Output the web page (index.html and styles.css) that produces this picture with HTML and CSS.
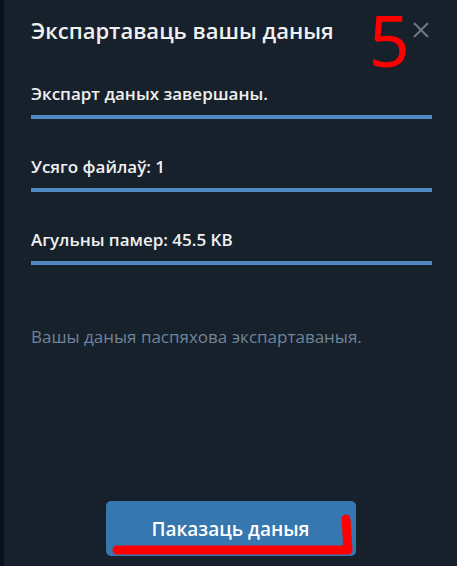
FILE: index.html
```html
<!DOCTYPE html>
<html lang="be">
<head>
<meta charset="utf-8">
<meta name="viewport" content="width=device-width, initial-scale=1">
<title>Экспартаваць вашы даныя</title>
<link rel="stylesheet" href="styles.css">
</head>
<body>
<main class="dialog">
  <header class="header">
    <h1 class="title">Экспартаваць вашы даныя</h1>
    <button class="close" type="button" aria-label="Закрыць">
      <svg width="16" height="16" viewBox="0 0 16 16" aria-hidden="true"><path d="M1 1 15 15M15 1 1 15" fill="none" stroke="currentColor" stroke-width="2"/></svg>
    </button>
    <span class="step">5</span>
  </header>
  <ul class="rows">
    <li class="row">Экспарт даных завершаны.</li>
    <li class="row">Усяго файлаў: 1</li>
    <li class="row">Агульны памер: 45.5 KB</li>
  </ul>
  <p class="about">Вашы даныя паспяхова экспартаваныя.</p>
  <footer class="footer">
    <button class="show" type="button">Паказаць даныя
      <svg class="mark" width="250" height="55" viewBox="0 0 250 55" aria-hidden="true"><path d="M11 49H242L240 18" fill="none" stroke="#ff0000" stroke-width="9" stroke-linecap="round" stroke-linejoin="round"/></svg>
    </button>
  </footer>
</main>
</body>
</html>
```

FILE: styles.css
```css
* {
  box-sizing: border-box;
}

body {
  margin: 0;
  background: #17212b;
  font-family: "Open Sans", "Noto Sans", sans-serif;
  color: #f0f0f0;
}

.dialog {
  display: flex;
  flex-direction: column;
  min-height: 100vh;
  padding: 15px 25px 10px 27px;
  border-left: 4px solid #0b111c;
}

.header {
  position: relative;
  display: flex;
  align-items: center;
  justify-content: space-between;
  height: 30px;
}

.title {
  margin: 0;
  font-size: 22px;
  line-height: 30px;
  font-weight: 600;
  white-space: nowrap;
}

.close {
  display: flex;
  padding: 3px;
  border: 0;
  background: none;
  color: #6c7883;
}

.step {
  position: absolute;
  top: -12px;
  right: 22px;
  font-family: "Noto Sans", sans-serif;
  font-size: 72px;
  line-height: 72px;
  color: #ff0000;
}

.rows {
  display: grid;
  gap: 35px;
  margin: 36px 0 0;
  padding: 0;
  list-style: none;
}

.row {
  padding-bottom: 8px;
  border-bottom: 4px solid #5288c1;
  font-size: 17px;
  line-height: 26px;
  font-weight: 600;
}

.about {
  margin: 59px 0 0;
  font-size: 17px;
  line-height: 26px;
  color: #708499;
}

.footer {
  display: flex;
  justify-content: center;
  margin: auto 2px 0 0;
}

.show {
  position: relative;
  width: 250px;
  height: 55px;
  padding: 0;
  border: 0;
  border-radius: 5px;
  background: #3677b0;
  color: #ffffff;
  font: inherit;
  font-size: 19px;
  font-weight: 600;
}

.mark {
  position: absolute;
  inset: 0;
}
```
